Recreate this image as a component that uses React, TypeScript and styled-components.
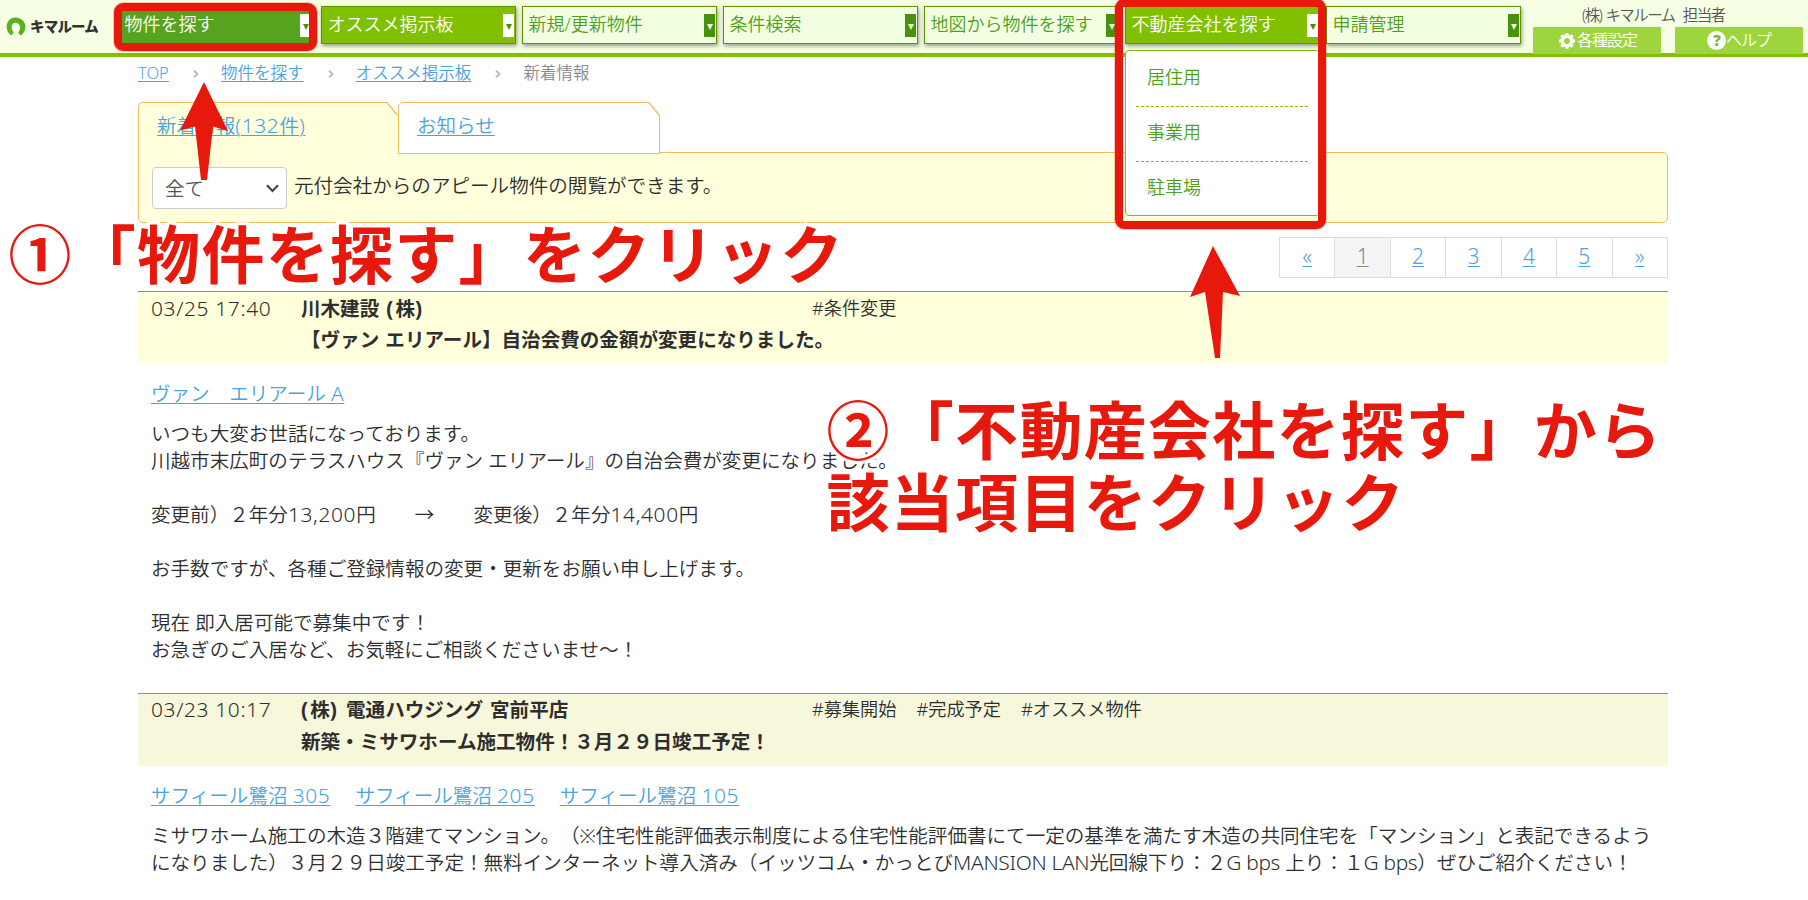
import React from 'react';
import styled, { createGlobalStyle, css } from 'styled-components';

const RED = '#e7190c';
const GREEN = '#80c000';
const LINK = '#4aa3df';
const CREAM = '#ffffdc';
const TAB_LINE = '#f6bb5d';

const GlobalStyle = createGlobalStyle`
  * { box-sizing: border-box; }
  body {
    margin: 0;
    background: #fff;
    color: #2e2e2e;
    font: 350 19.57px/27px 'Noto Sans', 'Noto Sans CJK JP', sans-serif;
    text-spacing-trim: space-all;
    overflow: hidden;
  }
`;

const Page = styled.div`
  position: relative;
  width: 1808px;
  height: 900px;
  overflow: hidden;
`;

/* Latin runs are drawn slightly larger than the Japanese glyphs around them */
const LatinRun = styled.span<{ $letters?: boolean }>`
  font-size: 1.07em;
  line-height: 0;
  letter-spacing: ${(p) => (p.$letters ? '-0.015em' : '0.03em')};
`;

const Mixed = ({ children }: { children: string }) => (
  <>
    {children.split(/([!-~]+(?: [!-~]+)*)/).map((part, i) =>
      i % 2 ? (
        <LatinRun key={i} $letters={/[A-Za-z]{2}/.test(part)}>
          {part}
        </LatinRun>
      ) : (
        part
      ),
    )}
  </>
);

/* ---------- header ---------- */

const Header = styled.header`
  display: flex;
  height: 57px;
  background: #f6ffe3;
  border-bottom: 4px solid ${GREEN};
`;

const Logo = styled.div`
  display: flex;
  align-items: center;
  gap: 4px;
  width: 118px;
  padding-left: 6px;
  color: #333;
  font-size: 14.5px;
  font-weight: 900;
  letter-spacing: -0.8px;
  white-space: nowrap;
`;

const Nav = styled.nav`
  display: flex;
  gap: 6px;
  padding-top: 6px;
`;

type Tone = 'dark' | 'solid' | 'light';

const toneStyles = {
  dark: css`background: #56a31f; color: #fff; margin-right: 2px;`,
  solid: css`background: ${GREEN}; color: #fff;`,
  light: css`background: #f3ffe1; color: #4f9f1b;`,
};

const NavItem = styled.div<{ $tone: Tone }>`
  position: relative;
  display: flex;
  justify-content: space-between;
  width: 195px;
  height: 38px;
  padding: 7px 1px 0 5.5px;
  border: 1px solid #5f9400;
  box-shadow: 1px 2px 4px rgba(0, 0, 0, 0.4);
  font-size: 18px;
  line-height: 21px;
  white-space: nowrap;
  ${(p) => toneStyles[p.$tone]}
`;

const Caret = styled.span<{ $tone: Tone }>`
  display: flex;
  align-items: center;
  justify-content: center;
  width: 11px;
  height: 23px;
  background: ${(p) => (p.$tone === 'light' ? '#46920f' : '#fff')};
  color: ${(p) => (p.$tone === 'light' ? '#f3ffe1' : '#46920f')};
  &::after {
    content: '';
    margin-top: 2px;
    border: 3.5px solid transparent;
    border-top: 6px solid currentColor;
    border-bottom: 0;
  }
`;

const Menu = styled.div`
  position: absolute;
  top: 43px;
  left: -1px;
  width: 195px;
  height: 166px;
  padding: 0 11px 0 10px;
  background: #fff;
  border: 1px solid ${GREEN};
  border-radius: 4px;
  color: #4f9f1b;
`;

const MenuItem = styled.div`
  height: 55px;
  padding-left: 11px;
  line-height: 53px;
  & + & {
    border-top: 1px dashed ${GREEN};
    line-height: 51px;
  }
`;

const Account = styled.div`
  display: flex;
  flex-direction: column;
  width: 270px;
  margin-left: 12px;
`;

const AccountName = styled.div`
  height: 27px;
  padding: 2px 0 0 49px;
  color: #555;
  font-size: 15.5px;
  letter-spacing: -1.6px;
  word-spacing: 1.7px;
  white-space: pre;
`;

const AccountButtons = styled.div`
  display: flex;
  gap: 14.5px;
`;

const AccountButton = styled.div<{ $pad: number }>`
  display: flex;
  align-items: center;
  width: 127.5px;
  height: 27px;
  padding-left: ${(p) => p.$pad}px;
  background: #9ed53f;
  color: #fff;
  font-size: 16px;
  letter-spacing: -1px;
  white-space: nowrap;
`;

const LogoMark = () => (
  <svg width="20" height="20" viewBox="0 0 20 20">
    <path
      d="M5.4 18.4C-1.6 14.2-.6 3.2 6.6.9c6-1.9 12.8 2.2 12.8 9 0 3.700-1.900 6.600-4.900 8.500l-2.400-2.900c3.200-3.600 2.600-9.700-2.400-9.800C5 5.700 4.500 11.900 7.700 15.300z"
      fill="#5cb11f"
    />
  </svg>
);

const Gear = () => (
  <svg width="16" height="16" viewBox="-8 -8 16 16">
    {[0, 45, 90, 135].map((a) => (
      <rect key={a} x="-1.7" y="-8" width="3.400" height="16" rx="1" fill="#fff" transform={`rotate(${a})`} />
    ))}
    <circle r="6.200" fill="#fff" />
    <circle r="3" fill="#9ed53f" />
  </svg>
);

const GearLabel = styled.span`
  padding-left: 2px;
`;

const HelpMark = styled.span`
  width: 19px;
  height: 19px;
  border-radius: 50%;
  background: #fff;
  color: #86b440;
  font: 800 15px/19px 'Open Sans', sans-serif;
  text-align: center;
`;

/* ---------- content ---------- */

const Content = styled.main`
  width: 1530px;
  margin-left: 138px;
`;

const Link = styled.a`
  color: ${LINK};
  text-decoration: underline;
  text-decoration-thickness: 1px;
  text-underline-offset: 2px;
`;

const Crumbs = styled.div`
  display: flex;
  align-items: center;
  height: 45px;
  padding-bottom: 15px;
  color: #888;
  font-size: 16.5px;
  white-space: nowrap;
`;

const CrumbArrow = styled.svg`
  width: 6px;
  height: 8px;
  margin: 3px 22.200px 0 24px;
`;

const Tabs = styled.div`
  display: flex;
  height: 50px;
`;

const Tab = styled.div<{ $active?: boolean }>`
  position: relative;
  width: ${(p) => (p.$active ? 260 : 262)}px;
  height: ${(p) => (p.$active ? 51 : 52)}px;
  padding: 9px 0 0 18px;
  background: ${(p) => (p.$active ? CREAM : '#fff')};
  border: 1px solid ${TAB_LINE};
  border-width: ${(p) => (p.$active ? '1px 0 0 1px' : '1px')};
  border-top-left-radius: 5px;
  z-index: 1;
`;

const TabCorner = styled.svg<{ $edge: number }>`
  position: absolute;
  top: -1px;
  right: ${(p) => p.$edge}px;
  width: 12px;
  height: 14px;
`;

const Corner = ({ edge }: { edge: number }) => (
  <TabCorner $edge={edge} viewBox="0 0 12 14">
    <path d="M1 0H12V13.500H11.500z" fill="#fff" />
    <path d="M0 .5H1L11.500 13.500" fill="none" stroke={TAB_LINE} strokeWidth="1.300" />
  </TabCorner>
);

const Filter = styled.div`
  display: flex;
  height: 71px;
  padding: 14px 0 0 13px;
  background: ${CREAM};
  border: 1px solid ${TAB_LINE};
  border-radius: 0 5px 5px 5px;
`;

const Select = styled.div`
  display: flex;
  align-items: center;
  justify-content: space-between;
  width: 135px;
  height: 42px;
  margin-right: 7px;
  padding: 0 7px 0 12px;
  background: #fff;
  border: 1px solid #ccc;
  border-radius: 4px;
  color: #555;
`;

const FilterNote = styled.div`
  padding-top: 5px;
`;

const Pager = styled.div`
  display: flex;
  width: 389px;
  height: 41px;
  margin: 14px 0 13px auto;
  border: 1px solid #ddd;
`;

const PageCell = styled.div<{ $current?: boolean }>`
  flex: 1;
  font-size: 21px;
  line-height: 36px;
  text-align: center;
  background: ${(p) => (p.$current ? '#f5f5f5' : '#fff')};
  ${Link} { color: ${(p) => (p.$current ? '#888' : LINK)}; }
  & + & { border-left: 1px solid #ddd; }
`;

const Entry = styled.article`
  height: 401.500px;
`;

const EntryHead = styled.div<{ $read?: boolean }>`
  display: grid;
  grid-template-columns: 150px 511px 1fr;
  grid-template-rows: 31.500px 27px;
  height: 73px;
  padding: 2.500px 0 0 13px;
  background: ${(p) => (p.$read ? '#f7f7db' : CREAM)};
  border-top: 1px solid #8c8c8c;
  white-space: nowrap;
`;

const Strong = styled.div`
  font-weight: 700;
  word-spacing: 1px;
`;

const Company = styled(Strong)`
  word-spacing: 2px;
  ${LatinRun} { letter-spacing: 0.1em; }
`;

const EntryTitle = styled(Strong)`
  grid-column: 2 / 4;
`;

const Tags = styled.div`
  display: flex;
  gap: 20px;
  font-size: 18.200px;
`;

const EntryLinks = styled.div`
  display: flex;
  gap: 25px;
  padding: 16px 0 0 13px;
  white-space: pre;
`;

const EntryText = styled.div`
  padding: 13px 0 0 13px;
  white-space: pre;
`;

/* ---------- annotations ---------- */

const Frame = styled.div<{ $x: number; $y: number; $w: number; $h: number }>`
  position: absolute;
  z-index: 3;
  left: ${(p) => p.$x}px;
  top: ${(p) => p.$y}px;
  width: ${(p) => p.$w}px;
  height: ${(p) => p.$h}px;
  border: 8.500px solid ${RED};
  border-radius: 9px;
  box-shadow: 0 0 0 1px rgba(231, 25, 12, 0.25);
`;

const Arrow = styled.svg<{ $x: number; $y: number; $w: number; $h: number }>`
  position: absolute;
  z-index: 3;
  left: ${(p) => p.$x}px;
  top: ${(p) => p.$y}px;
  width: ${(p) => p.$w}px;
  height: ${(p) => p.$h}px;
  fill: ${RED};
`;

const Callout = styled.div<{ $x: number; $y: number }>`
  position: absolute;
  z-index: 2;
  left: ${(p) => p.$x}px;
  top: ${(p) => p.$y}px;
  color: ${RED};
  font: 700 63px/72px 'Noto Sans CJK JP', sans-serif;
  letter-spacing: 1.3px;
  white-space: pre;
  -webkit-text-stroke: 6px #fff;
  paint-order: stroke fill;
`;

const navItems: { label: string; tone: Tone; menu?: string[] }[] = [
  { label: '物件を探す', tone: 'dark' },
  { label: 'オススメ掲示板', tone: 'solid' },
  { label: '新規/更新物件', tone: 'light' },
  { label: '条件検索', tone: 'light' },
  { label: '地図から物件を探す', tone: 'light' },
  { label: '不動産会社を探す', tone: 'solid', menu: ['居住用', '事業用', '駐車場'] },
  { label: '申請管理', tone: 'light' },
];

const entries = [
  {
    time: '03/25 17:40',
    company: '川木建設 (株)',
    tags: ['#条件変更'],
    title: '【ヴァン エリアール】自治会費の金額が変更になりました。',
    links: ['ヴァン　エリアール A'],
    text: `いつも大変お世話になっております。
川越市末広町のテラスハウス『ヴァン エリアール』の自治会費が変更になりました。

変更前）２年分13,200円　　→　　変更後）２年分14,400円

お手数ですが、各種ご登録情報の変更・更新をお願い申し上げます。

現在 即入居可能で募集中です！
お急ぎのご入居など、お気軽にご相談くださいませ～！`,
  },
  {
    time: '03/23 10:17',
    company: '(株) 電通ハウジング 宮前平店',
    tags: ['#募集開始', '#完成予定', '#オススメ物件'],
    title: '新築・ミサワホーム施工物件！３月２９日竣工予定！',
    links: ['サフィール鷺沼 305', 'サフィール鷺沼 205', 'サフィール鷺沼 105'],
    text: `ミサワホーム施工の木造３階建てマンション。（※住宅性能評価表示制度による住宅性能評価書にて一定の基準を満たす木造の共同住宅を「マンション」と表記できるよう
になりました）３月２９日竣工予定！無料インターネット導入済み（イッツコム・かっとびMANSION LAN光回線下り：２G bps 上り：１G bps）ぜひご紹介ください！`,
  },
];

const Separator = () => (
  <CrumbArrow viewBox="0 0 6 8">
    <path d="M1 .8L4.600 4L1 7.200" fill="none" stroke="#bbb" strokeWidth="2" />
  </CrumbArrow>
);

export default function App() {
  return (
    <Page lang="ja">
      <GlobalStyle />
      <Header>
        <Logo>
          <LogoMark />
          キマルーム
        </Logo>
        <Nav>
          {navItems.map(({ label, tone, menu }) => (
            <NavItem key={label} $tone={tone}>
              <span>{label}</span>
              <Caret $tone={tone} />
              {menu && (
                <Menu>
                  {menu.map((m) => (
                    <MenuItem key={m}>{m}</MenuItem>
                  ))}
                </Menu>
              )}
            </NavItem>
          ))}
        </Nav>
        <Account>
          <AccountName>(株) キマルーム  担当者</AccountName>
          <AccountButtons>
            <AccountButton $pad={26}>
              <Gear />
              <GearLabel>各種設定</GearLabel>
            </AccountButton>
            <AccountButton $pad={32}>
              <HelpMark>?</HelpMark>
              ヘルプ
            </AccountButton>
          </AccountButtons>
        </Account>
      </Header>

      <Content>
        <Crumbs>
          <Link>TOP</Link>
          <Separator />
          <Link>物件を探す</Link>
          <Separator />
          <Link>オススメ掲示板</Link>
          <Separator />
          <span>新着情報</span>
        </Crumbs>

        <Tabs>
          <Tab $active>
            <Link><Mixed>新着情報(132件)</Mixed></Link>
            <Corner edge={0} />
          </Tab>
          <Tab>
            <Link>お知らせ</Link>
            <Corner edge={-1} />
          </Tab>
        </Tabs>
        <Filter>
          <Select>
            全て
            <svg width="13" height="9" viewBox="0 0 13 9">
              <path d="M1 1.200L6.500 6.900L12 1.200" fill="none" stroke="#444" strokeWidth="2.100" />
            </svg>
          </Select>
          <FilterNote>元付会社からのアピール物件の閲覧ができます。</FilterNote>
        </Filter>

        <Pager>
          {['«', '1', '2', '3', '4', '5', '»'].map((p) => (
            <PageCell key={p} $current={p === '1'}>
              <Link>{p}</Link>
            </PageCell>
          ))}
        </Pager>

        {entries.map((e, i) => (
          <Entry key={e.time}>
            <EntryHead $read={i === 1}>
              <div><Mixed>{e.time}</Mixed></div>
              <Company><Mixed>{e.company}</Mixed></Company>
              <Tags>
                {e.tags.map((t) => (
                  <span key={t}>{t}</span>
                ))}
              </Tags>
              <EntryTitle>{e.title}</EntryTitle>
            </EntryHead>
            <EntryLinks>
              {e.links.map((l) => (
                <Link key={l}><Mixed>{l}</Mixed></Link>
              ))}
            </EntryLinks>
            <EntryText><Mixed>{e.text}</Mixed></EntryText>
          </Entry>
        ))}
      </Content>

      <Callout $x={8.5} $y={215}>①「物件を探す」をクリック</Callout>
      <Callout $x={826.5} $y={390.5}>{'②「不動産会社を探す」から\n該当項目をクリック'}</Callout>
      <Frame $x={114} $y={2.5} $w={203} $h={48.5} />
      <Frame $x={1115} $y={-1} $w={211} $h={229.5} />
      <Arrow $x={180} $y={82} $w={48} $h={99} viewBox="0 0 48 99">
        <path d="M24 0L48 49L33 44.500L27 98H21L15 44.500L0 48.500z" />
      </Arrow>
      <Arrow $x={1190} $y={246} $w={50} $h={112} viewBox="0 0 50 112">
        <path d="M23 0L50 50L33 46L30 112H25L15 46L0 51z" />
      </Arrow>
    </Page>
  );
}
